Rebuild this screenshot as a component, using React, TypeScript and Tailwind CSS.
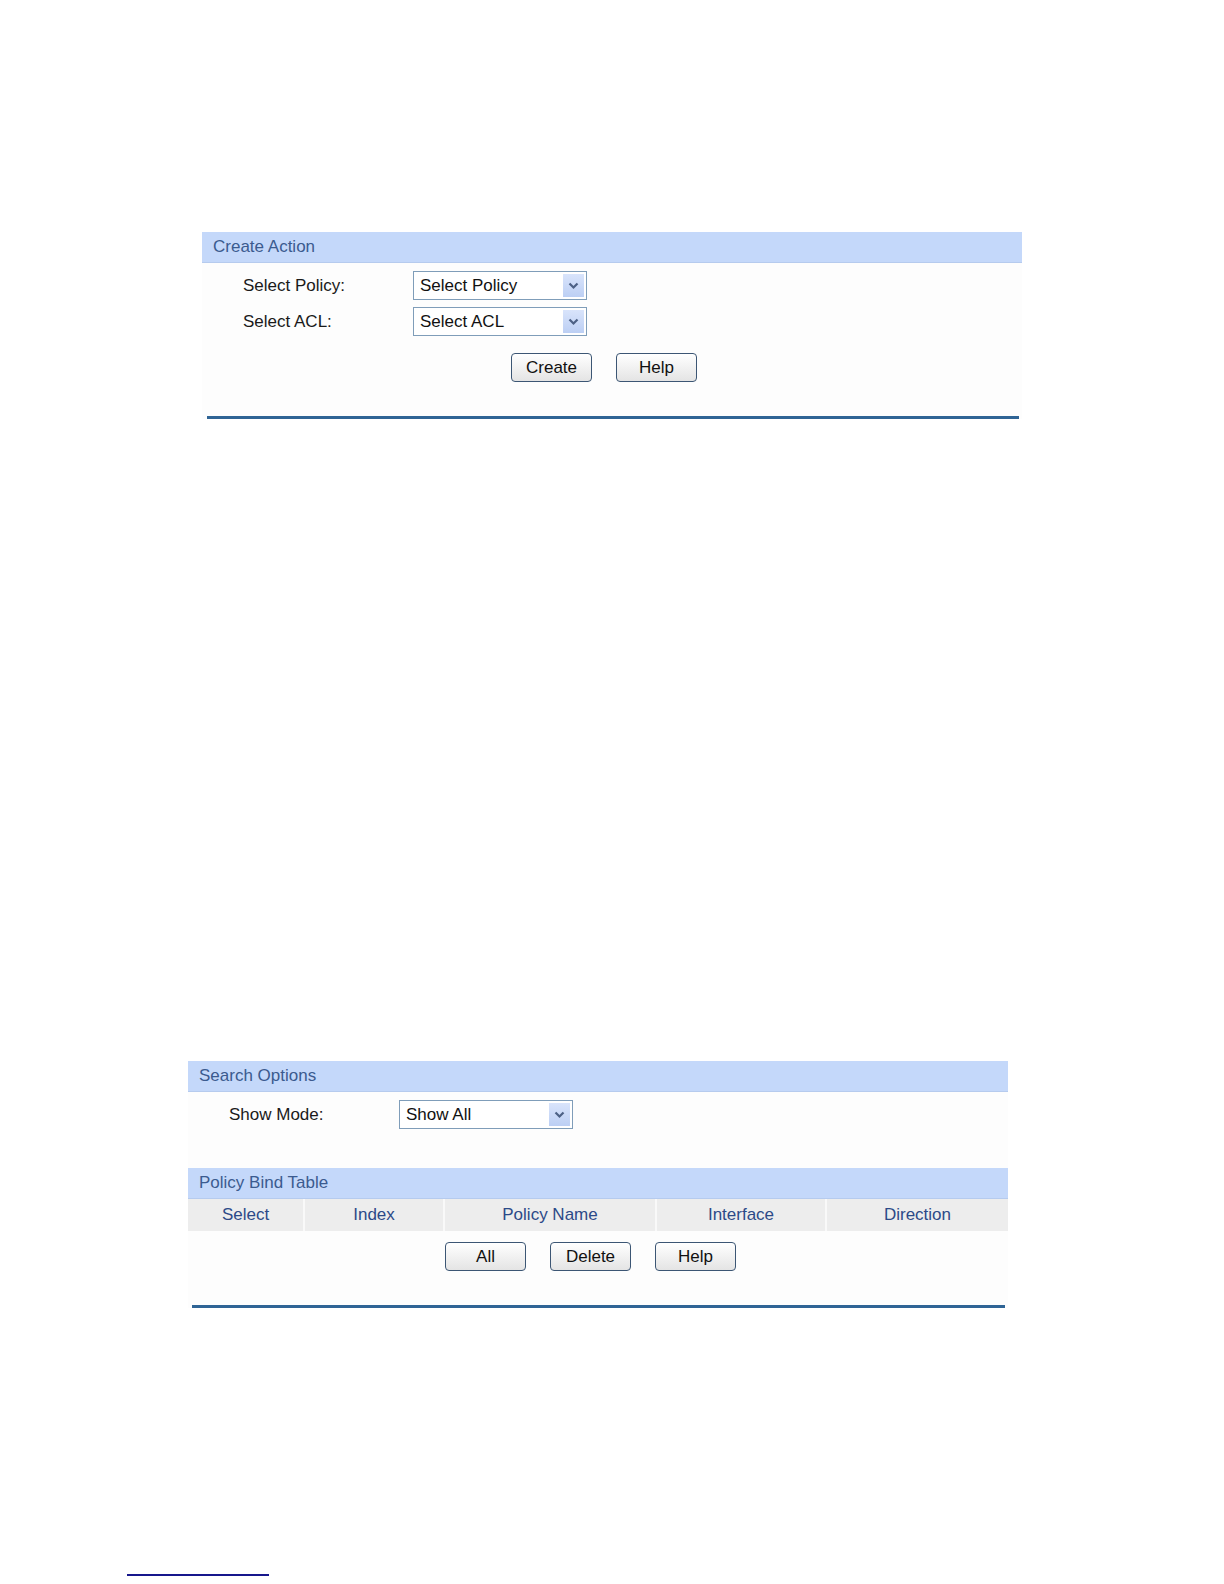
const font = { fontFamily: '"Liberation Sans", Arial, sans-serif' };

const Chevron = () => (
  <svg width="11" height="8" viewBox="0 0 11 8">
    <path d="M1.5 1.5 L5.5 5.5 L9.5 1.5" fill="none" stroke="#4d6185" strokeWidth="2.2" />
  </svg>
);

const FakeSelect = ({ value, w = "w-[174px]" }: { value: string; w?: string }) => (
  <div className={`${w} h-[29px] border border-[#7f9db9] bg-white flex items-center justify-between pl-[6px] pr-[2px]`}>
    <span className="text-[17px] text-[#111]">{value}</span>
    <div className="w-[21px] h-[23px] bg-gradient-to-b from-[#d9e4fb] to-[#bccff4] flex items-center justify-center">
      <Chevron />
    </div>
  </div>
);

const Btn = ({ label }: { label: string }) => (
  <button className="w-[81px] h-[29px] rounded-[4px] border border-[#3c5674] bg-gradient-to-b from-[#ffffff] to-[#e4e4e4] text-[17px] text-[#111] leading-none">
    {label}
  </button>
);

const Header = ({ title }: { title: string }) => (
  <div className="h-[31px] bg-[#c4d8fa] pl-[11px] flex items-center text-[17px] text-[#3b5b8f] border-b border-[#b6cbee]">
    {title}
  </div>
);

const FormRow = ({ label, value }: { label: string; value: string }) => (
  <div className="flex items-center">
    <div className="w-[211px] pl-[41px] text-[17px] text-[#1a1a1a]">{label}</div>
    <FakeSelect value={value} />
  </div>
);

const cols = [
  { name: "Select", w: "w-[115px]" },
  { name: "Index", w: "w-[140px]" },
  { name: "Policy Name", w: "w-[212px]" },
  { name: "Interface", w: "w-[170px]" },
  { name: "Direction", w: "flex-1" },
];

export default function App() {
  return (
    <div className="w-full h-[1584px] overflow-hidden bg-white flex flex-col" style={font}>
      <div className="mt-[232px] ml-[202px] w-[820px]">
        <Header title="Create Action" />
        <div className="bg-[#fdfdfd] pt-[8px]">
          <div className="flex flex-col gap-[7px]">
            <FormRow label="Select Policy:" value="Select Policy" />
            <FormRow label="Select ACL:" value="Select ACL" />
          </div>
          <div className="flex gap-[24px] pl-[309px] mt-[17px]">
            <Btn label="Create" />
            <Btn label="Help" />
          </div>
          <div className="h-[34px]" />
          <div className="ml-[5px] mr-[3px] h-[3px] bg-[#2f6495]" />
        </div>
      </div>

      <div className="mt-[642px] ml-[188px] w-[820px]">
        <Header title="Search Options" />
        <div className="bg-[#fdfdfd] pt-[8px] pb-[39px]">
          <FormRow label="Show Mode:" value="Show All" />
        </div>
        <Header title="Policy Bind Table" />
        <div className="flex h-[32px] bg-[#ededed]">
          {cols.map((c, i) => (
            <div
              key={c.name}
              className={`${c.w} flex items-center justify-center text-[17px] text-[#2c4a88] ${i > 0 ? "border-l-2 border-[#f9f9f9]" : ""}`}
            >
              {c.name}
            </div>
          ))}
        </div>
        <div className="bg-[#fdfdfd] pt-[11px]">
          <div className="flex gap-[24px] pl-[257px]">
            <Btn label="All" />
            <Btn label="Delete" />
            <Btn label="Help" />
          </div>
          <div className="h-[34px]" />
          <div className="ml-[4px] mr-[3px] h-[3px] bg-[#2f6495]" />
        </div>
      </div>

      <div className="mt-[266px] ml-[127px] w-[142px] h-[2px] bg-[#17178c]" />
    </div>
  );
}
